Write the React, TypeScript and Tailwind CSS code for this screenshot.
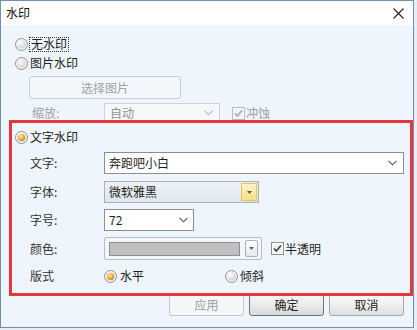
import { useId } from "react";

function Radio({ checked = false }: { checked?: boolean }) {
  const id = useId().replace(/:/g, "");
  return (
    <svg width="13" height="13" viewBox="0 0 13 13" className="shrink-0">
      <defs>
        <radialGradient id={`rg${id}`} cx="0.35" cy="0.3" r="0.8">
          <stop offset="0" stopColor="#ffffff" />
          <stop offset="1" stopColor="#c9ccd0" />
        </radialGradient>
        <radialGradient id={`ro${id}`} cx="0.4" cy="0.35" r="0.7">
          <stop offset="0" stopColor="#fde7a6" />
          <stop offset="0.55" stopColor="#f3b33a" />
          <stop offset="1" stopColor="#c9801a" />
        </radialGradient>
      </defs>
      <circle cx="6.5" cy="6.5" r="6" fill="#f4f4f4" stroke="#8f9296" />
      <circle cx="6.5" cy="6.5" r="4.3" fill={`url(#rg${id})`} />
      {checked && <circle cx="6.5" cy="6.5" r="3.6" fill={`url(#ro${id})`} />}
    </svg>
  );
}

function Check({ faded = false }: { faded?: boolean }) {
  return (
    <svg width="13" height="13" viewBox="0 0 13 13" className="shrink-0">
      <rect x="0.5" y="0.5" width="12" height="12" fill={faded ? "#f5f7f9" : "#ffffff"} stroke={faded ? "#b9bec4" : "#8e8f8f"} />
      <rect x="2.5" y="2.5" width="8" height="8" fill={faded ? "#eef1f4" : "#eaedf0"} />
      <path d="M3 6.5 L5.3 9 L10 3.5" fill="none" stroke={faded ? "#a9adb2" : "#404040"} strokeWidth="1.6" />
    </svg>
  );
}

function Chevron({ color = "#555" }: { color?: string }) {
  return (
    <svg width="9" height="6" viewBox="0 0 9 6" className="shrink-0">
      <path d="M0.5 0.8 L4.5 4.8 L8.5 0.8" fill="none" stroke={color} strokeWidth="1.1" />
    </svg>
  );
}

function Tri({ color = "#555" }: { color?: string }) {
  return (
    <svg width="5" height="3" viewBox="0 0 5 3">
      <path d="M0 0 L5 0 L2.5 3 Z" fill={color} />
    </svg>
  );
}

export default function App() {
  return (
    <div className="w-[417px] h-[330px] bg-[#e6edf5] font-['Noto_Sans_CJK_SC','Microsoft_YaHei',sans-serif] text-[12px] text-[#1e1e1e] leading-none">
      <div className="w-[414px] h-[328px] border border-[#6f91b8] flex flex-col bg-[#eef5fc]">
        {/* Title bar */}
        <div className="h-[24px] shrink-0 bg-white flex items-center justify-between pl-[5px] pr-[9px]">
          <span className="text-[12px] text-[#111]">水印</span>
          <svg width="11" height="11" viewBox="0 0 11 11">
            <path d="M0.5 0.5 L10.5 10.5 M10.5 0.5 L0.5 10.5" stroke="#222" strokeWidth="1.1" />
          </svg>
        </div>

        <div className="flex flex-col flex-1">
          {/* 无水印 */}
          <div className="mt-[11px] h-[16px] flex items-center pl-[14px] gap-[1px]">
            <Radio />
            <span className="border border-dotted border-[#333] px-[1px] h-[15px] flex items-center">无水印</span>
          </div>
          {/* 图片水印 */}
          <div className="mt-[3px] h-[16px] flex items-center pl-[14px] gap-[2px]">
            <Radio />
            <span>图片水印</span>
          </div>
          <div className="mt-[5px] ml-[28px] w-[152px] h-[23px] border border-[#c8ced6] rounded-[3px] bg-[#f3f6fa] text-[#a0a4a8] flex items-center justify-center">
            选择图片
          </div>
          {/* 缩放 */}
          <div className="mt-[4px] h-[20px] flex items-center">
            <span className="ml-[31px] w-[72px] text-[#a0a4a8]">缩放:</span>
            <div className="w-[116px] h-[20px] border border-[#cdd2d8] bg-[#f5f7f9] flex items-center justify-between pl-[5px] pr-[6px] text-[#8e9297]">
              <span>自动</span>
              <Chevron color="#b0b4b8" />
            </div>
            <div className="ml-[12px] flex items-center gap-[1px] text-[#a0a4a8]">
              <Check faded />
              <span>冲蚀</span>
            </div>
          </div>

          {/* Highlighted section */}
          <div className="relative z-10 -mt-[3px] ml-[8px] w-[404px] h-[176px] shrink-0 border-[3px] border-[#e8363d] flex flex-col">
            <div className="mt-[6px] h-[16px] flex items-center pl-[3px] gap-[2px]">
              <Radio checked />
              <span>文字水印</span>
            </div>
            <div className="mt-[7px] h-[22px] flex items-center">
              <span className="pl-[18px] w-[92px] text-[#333]">文字:</span>
              <div className="w-[300px] h-[22px] border border-[#8a8e94] bg-white flex items-center justify-between pl-[4px] pr-[6px]">
                <span>奔跑吧小白</span>
                <Chevron />
              </div>
            </div>
            <div className="mt-[7px] h-[22px] flex items-center">
              <span className="pl-[18px] w-[92px] text-[#333]">字体:</span>
              <div className="w-[155px] h-[22px] border border-[#a9b0b8] bg-gradient-to-b from-[#eef2f6] to-[#dfe6ee] flex items-center justify-between pl-[4px] pr-[1px]">
                <span>微软雅黑</span>
                <div className="w-[16px] h-[18px] border border-[#e2c464] bg-gradient-to-b from-[#fdf3c5] to-[#f6de86] flex items-center justify-center">
                  <Tri color="#6b5a2a" />
                </div>
              </div>
            </div>
            <div className="mt-[6px] h-[22px] flex items-center">
              <span className="pl-[18px] w-[92px] text-[#333]">字号:</span>
              <div className="w-[90px] h-[22px] border border-[#8a8e94] bg-white flex items-center justify-between pl-[4px] pr-[5px]">
                <span>72</span>
                <Chevron />
              </div>
            </div>
            <div className="mt-[6px] h-[23px] flex items-center">
              <span className="pl-[18px] w-[92px] text-[#333]">颜色:</span>
              <div className="w-[158px] h-[23px] border border-[#b6bdc5] rounded-[2px] bg-[#f3f6f9] flex items-center pl-[4px] pr-[3px] gap-[5px]">
                <div className="w-[132px] h-[14px] border border-[#8c8f93] bg-[#c0c0c0]" />
                <div className="w-[13px] h-[17px] border border-[#a9b0b8] rounded-[2px] bg-gradient-to-b from-white to-[#e6eaee] flex items-center justify-center">
                  <Tri color="#666" />
                </div>
              </div>
              <div className="ml-[9px] flex items-center gap-[1px]">
                <Check />
                <span>半透明</span>
              </div>
            </div>
            <div className="mt-[8px] h-[16px] flex items-center">
              <span className="pl-[18px] w-[92px] text-[#333]">版式</span>
              <div className="w-[121px] flex items-center gap-[3px]">
                <Radio checked />
                <span>水平</span>
              </div>
              <div className="flex items-center gap-[2px]">
                <Radio />
                <span>倾斜</span>
              </div>
            </div>
          </div>

          {/* Buttons */}
          <div className="-mt-[2px] h-[22px] flex justify-end pr-[9px] gap-[5px]">
            <div className="w-[75px] h-[22px] border border-[#c3c8ce] rounded-[3px] bg-[#f4f6f8] text-[#9a9ea3] flex items-center justify-center">
              应用
            </div>
            <div className="w-[75px] h-[22px] border border-[#6f7378] rounded-[3px] bg-gradient-to-b from-[#f6f6f6] via-[#ebebeb] to-[#d8d8d8] flex items-center justify-center">
              确定
            </div>
            <div className="w-[75px] h-[22px] border border-[#a5a9ae] rounded-[3px] bg-gradient-to-b from-[#f8f8f8] via-[#efefef] to-[#dedede] flex items-center justify-center">
              取消
            </div>
          </div>
        </div>
      </div>
    </div>
  );
}
